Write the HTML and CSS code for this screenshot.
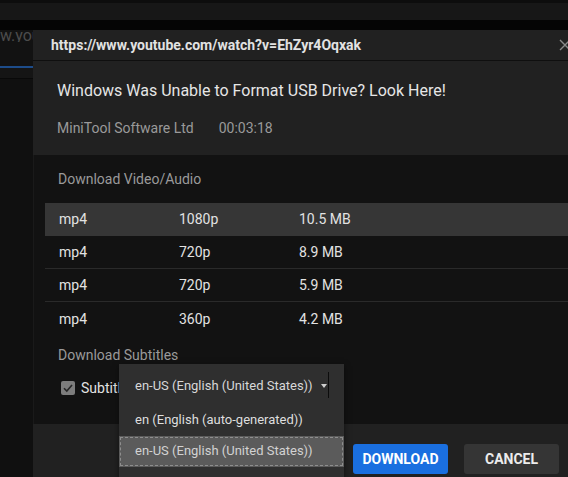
FILE: index.html
```html
<!DOCTYPE html>
<html>
<head>
<meta charset="utf-8">
<title>Download</title>
<link rel="stylesheet" href="styles.css">
</head>
<body>
  <!-- app behind the dialog -->
  <div class="app">
    <div class="app-strip"></div>
    <div class="app-bar"></div>
    <div class="app-gap"></div>
    <div class="app-url"><span class="app-url-text">w.you</span></div>
    <div class="app-tab"></div>
    <div class="app-rest"></div>
  </div>

  <div class="dialog">
    <div class="dialog-head">
      <span class="head-url">https://www.youtube.com/watch?v=EhZyr4Oqxak</span>
      <svg class="close" width="12" height="12" viewBox="0 0 12 12">
        <path d="M1 1 L11 11 M11 1 L1 11" stroke="#8a8a8a" stroke-width="1.4" fill="none"/>
      </svg>
    </div>

    <div class="info">
      <div class="info-title">Windows Was Unable to Format USB Drive? Look Here!</div>
      <div class="info-meta">
        <span>MiniTool Software Ltd</span>
        <span>00:03:18</span>
      </div>
    </div>

    <div class="main">
      <div class="section-label">Download Video/Audio</div>
      <div class="formats">
        <div class="format selected">
          <span class="col">mp4</span><span class="col">1080p</span><span class="col">10.5 MB</span>
        </div>
        <div class="format">
          <span class="col">mp4</span><span class="col">720p</span><span class="col">8.9 MB</span>
        </div>
        <div class="format">
          <span class="col">mp4</span><span class="col">720p</span><span class="col">5.9 MB</span>
        </div>
        <div class="format">
          <span class="col">mp4</span><span class="col">360p</span><span class="col">4.2 MB</span>
        </div>
      </div>
      <div class="section-label sub-label">Download Subtitles</div>
      <div class="sub-row">
        <span class="checkbox">
          <svg width="14" height="14" viewBox="0 0 14 14">
            <path d="M3 7.2 L5.8 10 L11 4" stroke="#262626" stroke-width="1.6" fill="none"/>
          </svg>
        </span>
        <span class="sub-text">Subtitle</span>
      </div>
    </div>

    <div class="footer">
      <button class="btn btn-primary">DOWNLOAD</button>
      <button class="btn">CANCEL</button>
    </div>

    <div class="dropdown">
      <div class="dd-current">
        <span>en-US (English (United States))</span>
        <span class="dd-arrow"></span>
        <span class="dd-line"></span>
      </div>
      <div class="dd-option">en (English (auto-generated))</div>
      <div class="dd-option active">en-US (English (United States))</div>
    </div>
  </div>
</body>
</html>
```

FILE: styles.css
```css
html, body {
  margin: 0;
  padding: 0;
  height: 100%;
  overflow: hidden;
}

body {
  font: 14px/20px Roboto, "Liberation Sans", sans-serif;
  background: #0f0f0f;
  color: #e0e0e0;
  position: relative;
}

/* background app */
.app-strip {
  height: 3px;
  background: #0d0d0d;
}

.app-bar {
  height: 17px;
  background: #171717;
}

.app-gap {
  height: 10px;
  background: #050505;
}

.app-url {
  height: 36px;
  background: #121212;
}

.app-url-text {
  display: block;
  width: 33px;
  overflow: hidden;
  white-space: nowrap;
  color: #4c4c4c;
  font-size: 16px;
  line-height: 12px;
}

.app-tab {
  height: 10px;
  background: #151515;
  border-top: 2px solid #1d4c8a;
  border-bottom: 1px solid #090909;
}

.app-rest {
  height: 400px;
  background: #101010;
}

/* dialog */
.dialog {
  position: absolute;
  left: 33px;
  top: 30px;
  width: 552px;
  bottom: -20px;
  display: flex;
  flex-direction: column;
  background: #121212;
}

.dialog-head {
  height: 30px;
  display: flex;
  align-items: center;
  padding: 0 14px 0 18px;
  background: #212121;
  border-bottom: 1px solid #0f0f0f;
}

.head-url {
  font-weight: bold;
  color: #e2e2e2;
}

.close {
  margin-left: auto;
}

.info {
  height: 94px;
  box-sizing: border-box;
  padding: 20px 24px 0;
  background: #212121;
}

.info-title {
  font-size: 16px;
  color: #e6e6e6;
}

.info-meta {
  margin-top: 17px;
  color: #9a9a9a;
  display: flex;
  gap: 25px;
}

.main {
  padding: 14px 11px 26px;
  background: #121212;
  border-left: 1px solid #1a1a1a;
}

.section-label {
  padding-left: 13px;
  color: #9a9a9a;
}

.formats {
  margin-top: 14px;
}

.format {
  height: 33px;
  box-sizing: border-box;
  display: flex;
  align-items: center;
  padding-left: 14px;
  color: #e2e2e2;
  border-bottom: 1px solid #2a2a2a;
}

.format:last-child {
  border-bottom: none;
}

.format.selected {
  background: #363636;
  border-bottom-color: #363636;
}

.col {
  width: 120px;
}

.sub-label {
  margin-top: 10px;
}

.sub-row {
  margin-top: 13px;
  padding-left: 16px;
  display: flex;
  align-items: center;
  gap: 6px;
}

.checkbox {
  width: 14px;
  height: 14px;
  border-radius: 2px;
  background: #7d7d7d;
  display: flex;
}

.sub-text {
  color: #e2e2e2;
}

.footer {
  flex: 1;
  display: flex;
  justify-content: flex-end;
  align-items: flex-start;
  gap: 16px;
  padding: 20px 26px 0 0;
  background: #212121;
}

.btn {
  width: 95px;
  height: 30px;
  border: none;
  border-radius: 3px;
  background: #353535;
  color: #ececec;
  font: bold 14px Roboto, "Liberation Sans", sans-serif;
}

.btn-primary {
  background: #1a6fe0;
  color: #fff;
}

/* open subtitle select */
.dropdown {
  position: absolute;
  left: 86px;
  top: 334px;
  width: 225px;
  height: 120px;
  background: #2f2f2f;
  box-shadow: 0 2px 6px rgba(0, 0, 0, 0.5);
  font-size: 13px;
  white-space: nowrap;
}

.dd-current {
  height: 41px;
  box-sizing: border-box;
  display: flex;
  align-items: flex-start;
  padding: 12px 15px 0 16px;
  color: #d8d8d8;
}

.dd-arrow {
  margin: 8px 1px 0 auto;
  width: 0;
  height: 0;
  border-left: 3.5px solid transparent;
  border-right: 3.5px solid transparent;
  border-top: 4px solid #cfcfcf;
}

.dd-line {
  width: 1px;
  height: 26px;
  margin-top: -4px;
  background: #0c0c0c;
}

.dd-option {
  height: 31px;
  box-sizing: border-box;
  padding: 5px 16px 0;
  color: #dedede;
}

.dd-option.active {
  background: #5b5b5b;
  color: #d2d2d2;
  outline: 1px dashed #8e8e8e;
  outline-offset: -2px;
}
```
